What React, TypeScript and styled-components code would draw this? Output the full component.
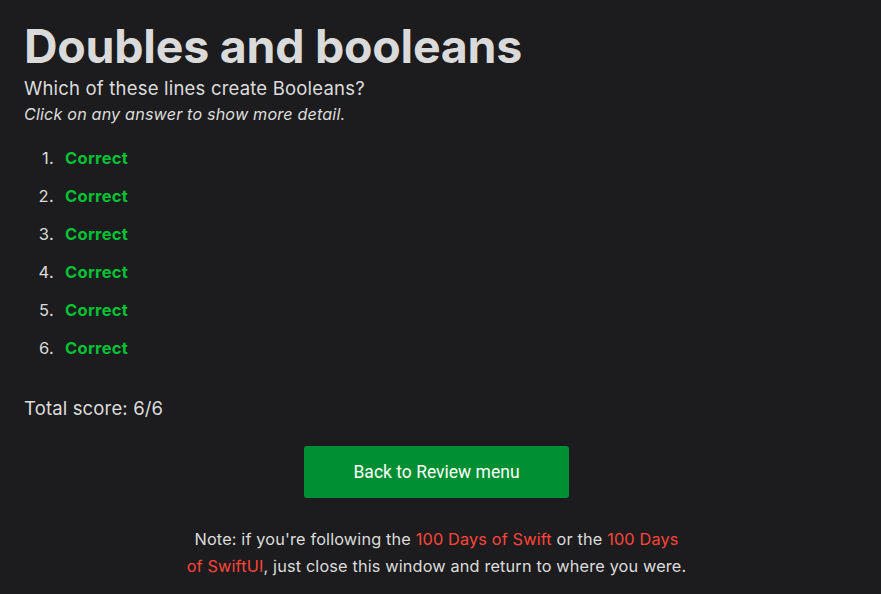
import React from "react";
import styled, { createGlobalStyle } from "styled-components";

const Global = createGlobalStyle`
  html, body { margin: 0; padding: 0; background: #1c1c1e; }
  body { font-family: Inter, "Noto Sans", sans-serif; color: #dcdcdc; }
`;

const Page = styled.main`
  padding: 17px 32px 20px 24px;
`;

const Title = styled.h1`
  font-size: 46.5px;
  font-weight: 700;
  line-height: 58px;
  margin: 0;
  color: #dadada;
  letter-spacing: -0.25px;
`;

const Question = styled.p`
  font-size: 18.5px;
  letter-spacing: 0.2px;
  line-height: 26px;
  margin: 0;
`;

const Hint = styled.p`
  font-size: 16.2px;
  letter-spacing: 0.15px;
  font-style: italic;
  line-height: 26px;
  margin: 0;
`;

const Answers = styled.ol`
  margin: 21px 0 0 0;
  padding: 0;
  list-style: none;
  counter-reset: answer;
  font-size: 16.5px;
`;

const Answer = styled.li`
  counter-increment: answer;
  display: flex;
  height: 38px;
  line-height: 20px;
  &::before {
    content: counter(answer) ".";
    width: 30px;
    margin-right: 11px;
    text-align: right;
    color: #dcdcdc;
    letter-spacing: 0.3px;
  }
`;

const Result = styled.span<{ $ok: boolean }>`
  color: ${(p) => (p.$ok ? "#00c234" : "#ff453a")};
  font-weight: 700;
  letter-spacing: 0.3px;
`;

const Score = styled.p`
  font-size: 18.5px;
  letter-spacing: 0.15px;
  margin: 19px 0 0 0;
  line-height: 26px;
`;

const Actions = styled.div`
  display: flex;
  justify-content: center;
  margin-top: 25px;
`;

const Button = styled.a`
  display: flex;
  align-items: center;
  justify-content: center;
  width: 265px;
  height: 52px;
  background: #008f33;
  color: #fff;
  font-family: Roboto, sans-serif;
  font-size: 17.5px;
  border-radius: 3px;
  text-decoration: none;
`;

const Note = styled.p`
  max-width: 502px;
  margin: 28px auto 0;
  text-align: center;
  font-size: 16.3px;
  letter-spacing: 0.15px;
  line-height: 27px;
  color: #dcdcdc;
`;

const Link = styled.a`
  color: #ff453a;
  text-decoration: none;
`;

export default function App() {
  const results = [true, true, true, true, true, true];
  return (
    <>
      <Global />
      <Page>
        <Title>Doubles and booleans</Title>
        <Question>Which of these lines create Booleans?</Question>
        <Hint>Click on any answer to show more detail.</Hint>
        <Answers>
          {results.map((r, i) => (
            <Answer key={i}>
              <Result $ok={r}>{r ? "Correct" : "Wrong"}</Result>
            </Answer>
          ))}
        </Answers>
        <Score>Total score: 6/6</Score>
        <Actions>
          <Button href="#">Back to Review menu</Button>
        </Actions>
        <Note>
          Note: if you're following the <Link href="#">100 Days of Swift</Link> or the{" "}
          <Link href="#">100 Days of SwiftUI</Link>, just close this window and return to where you were.
        </Note>
      </Page>
    </>
  );
}
